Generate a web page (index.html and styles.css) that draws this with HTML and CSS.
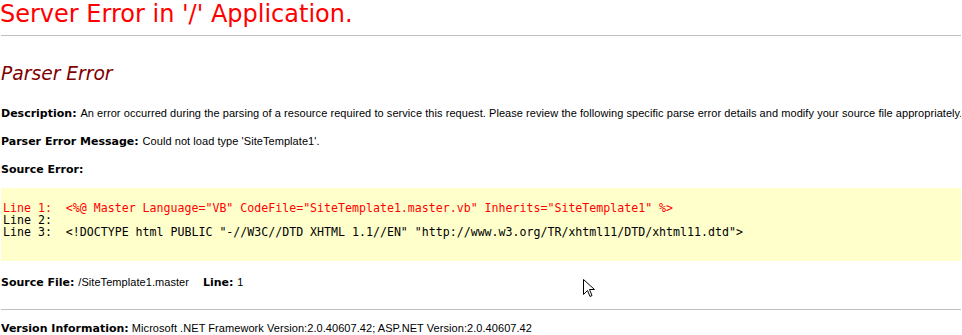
FILE: index.html
```html
<!DOCTYPE html>
<html lang="en">
<head>
    <meta charset="UTF-8">
    <title>Parser Error</title>
    <link rel="stylesheet" href="styles.css">
</head>
<body>
    <h1 class="title">Server Error in '/' Application.</h1>
    <hr class="rule">
    <h2 class="subtitle">Parser Error</h2>

    <div class="row first"><b>Description: </b>An error occurred during the parsing of a resource required to service this request. Please review the following specific parse error details and modify your source file appropriately.</div>
    <div class="row"><b>Parser Error Message: </b>Could not load type 'SiteTemplate1'.</div>
    <div class="row"><b>Source Error:</b></div>

    <div class="source-box">
<pre class="code"><span class="err">Line 1:  &lt;%@ Master Language="VB" CodeFile="SiteTemplate1.master.vb" Inherits="SiteTemplate1" %&gt;</span>
Line 2:  
Line 3:  &lt;!DOCTYPE html PUBLIC "-//W3C//DTD XHTML 1.1//EN" "http://www.w3.org/TR/xhtml11/DTD/xhtml11.dtd"&gt;</pre>
    </div>

    <div class="row file-row"><b>Source File: </b>/SiteTemplate1.master<b class="gap">Line: </b>1</div>
    <hr class="rule bottom">
    <div class="row version"><b>Version Information:</b> Microsoft .NET Framework Version:2.0.40607.42; ASP.NET Version:2.0.40607.42</div>

    <svg class="cursor" width="13" height="20" viewBox="0 0 13 20">
        <path d="M0.5 0.5 L0.5 15.5 L4.5 11.5 L7 17.5 L9 16.5 L6.5 10.5 L11.5 10.5 Z" fill="#fff" stroke="#000" stroke-width="1"/>
    </svg>
</body>
</html>
```

FILE: styles.css
```css
body {
    font-family: "Liberation Sans", Arial, sans-serif;
    font-size: 11px;
    color: black;
    background: #fff;
    margin: 0 1px;
    position: relative;
}
b {
    font-family: "DejaVu Sans", Verdana, sans-serif;
    font-weight: bold;
    letter-spacing: 0;
}
.title {
    font-family: "DejaVu Sans", Verdana, sans-serif;
    font-weight: normal;
    font-size: 24px;
    line-height: 28px;
    color: red;
    margin: 0 0 0 -1px;
}
.rule {
    border: 0;
    border-top: 1px solid #c0c0c0;
    height: 0;
    margin: 7px -1px 0 -1px;
}
.subtitle {
    font-family: "DejaVu Sans", Verdana, sans-serif;
    font-weight: normal;
    font-style: italic;
    font-size: 18.7px;
    line-height: 22px;
    color: maroon;
    margin: 27px 0 0 0;
}
.row {
    height: 14px;
    line-height: 14px;
    margin-top: 14px;
    letter-spacing: 0.06px;
    white-space: nowrap;
}
.row.first {
    margin-top: 21px;
}
.source-box {
    background: #ffffcc;
    margin-top: 12px;
    padding: 14px 2px 23px 2px;
}
.code {
    font-family: "DejaVu Sans Mono", "Lucida Console", monospace;
    font-size: 11.6px;
    line-height: 12px;
    margin: 0;
}
.err {
    color: red;
}
.file-row {
    margin-top: 14px;
}
.gap {
    margin-left: 14px;
}
.rule.bottom {
    margin-top: 20px;
}
.version {
    margin-top: 11px;
}
.cursor {
    position: absolute;
    left: 582px;
    top: 279px;
}
```
